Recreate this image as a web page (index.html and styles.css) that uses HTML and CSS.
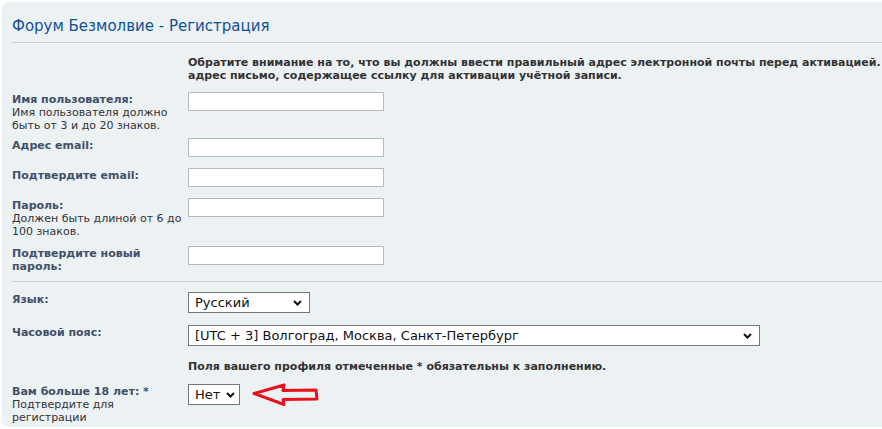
FILE: index.html
```html
<!DOCTYPE html>
<html lang="ru">
<head>
<meta charset="utf-8">
<title>Форум Безмолвие - Регистрация</title>
<link rel="stylesheet" href="styles.css">
</head>
<body>
<div class="panel">
  <h2 class="title">Форум Безмолвие - Регистрация</h2>

  <div class="notice">
    <span class="line">Обратите внимание на то, что вы должны ввести правильный адрес электронной почты перед активацией.</span>
    <span class="line">адрес письмо, содержащее ссылку для активации учётной записи.</span>
  </div>

  <div class="fields">
    <div class="row">
      <div class="label"><b>Имя пользователя:</b><span class="explain">Имя пользователя должно быть от 3 и до 20 знаков.</span></div>
      <div class="field"><input class="text" type="text"></div>
    </div>
    <div class="row">
      <div class="label"><b>Адрес email:</b></div>
      <div class="field"><input class="text" type="text"></div>
    </div>
    <div class="row">
      <div class="label"><b>Подтвердите email:</b></div>
      <div class="field"><input class="text" type="text"></div>
    </div>
    <div class="row">
      <div class="label"><b>Пароль:</b><span class="explain">Должен быть длиной от 6 до 100 знаков.</span></div>
      <div class="field"><input class="text" type="password"></div>
    </div>
    <div class="row row-last">
      <div class="label"><b class="narrow">Подтвердите новый пароль:</b></div>
      <div class="field"><input class="text" type="password"></div>
    </div>
  </div>

  <hr class="sep">

  <div class="fields fields2">
    <div class="row row-sel">
      <div class="label"><b>Язык:</b></div>
      <div class="field">
        <span class="sel sel-lang"><select><option>Русский</option></select><svg class="chev" width="9" height="6" viewBox="0 0 9 6"><path d="M1 1 L4.5 4.5 L8 1" fill="none" stroke="#111" stroke-width="2"/></svg></span>
      </div>
    </div>
    <div class="row row-sel">
      <div class="label"><b>Часовой пояс:</b></div>
      <div class="field">
        <span class="sel sel-tz"><select><option>[UTC + 3] Волгоград, Москва, Санкт-Петербург</option></select><svg class="chev" width="9" height="6" viewBox="0 0 9 6"><path d="M1 1 L4.5 4.5 L8 1" fill="none" stroke="#111" stroke-width="2"/></svg></span>
      </div>
    </div>
  </div>

  <p class="required">Поля вашего профиля отмеченные * обязательны к заполнению.</p>

  <div class="row row-age">
    <div class="label"><b>Вам больше 18 лет: *</b><span class="explain narrow">Подтвердите для регистрации</span></div>
    <div class="field">
      <span class="sel sel-age"><select><option>Нет</option><option>Да</option></select><svg class="chev" width="9" height="6" viewBox="0 0 9 6"><path d="M1 1 L4.5 4.5 L8 1" fill="none" stroke="#111" stroke-width="2"/></svg></span>
      <svg class="arrow" width="68" height="24" viewBox="0 0 68 24">
        <polygon points="2,10.5 32,2 31,7.5 64,7 65,16 31,16.5 32,21.5" fill="none" stroke="#e8101a" stroke-width="3" stroke-linejoin="round"/>
      </svg>
    </div>
  </div>
</div>
</body>
</html>
```
FILE: styles.css
```css
html, body {
  margin: 0;
  background: #ffffff;
  overflow: hidden;
}

body {
  padding: 2px 0 0 2px;
  font-family: "DejaVu Sans", Verdana, sans-serif;
  font-size: 11px;
  color: #333333;
}

.panel {
  background: #ecf1f3;
  border-radius: 7px 0 0 7px;
  padding: 14px 0 3px 10px;
}

.title {
  margin: 0;
  font-size: 15px;
  font-weight: normal;
  line-height: 20px;
  color: #115098;
  padding-bottom: 6px;
  border-bottom: 1px solid #cccccc;
}

.notice {
  margin: 13px 0 0 176px;
  font-weight: bold;
  line-height: 13px;
  color: #333333;
}

.notice .line {
  display: block;
  white-space: nowrap;
}

.fields {
  margin-top: 10px;
  display: flex;
  flex-direction: column;
  gap: 6px;
}

.row {
  display: flex;
  min-height: 24px;
}

.row-last {
  margin-top: 2px;
}

.label {
  width: 182px;
  margin-right: -6px;
  padding-top: 1px;
  line-height: 13px;
  color: #425067;
}

.label b {
  display: block;
  font-weight: bold;
}

.label .narrow {
  max-width: 160px;
}

.explain {
  display: block;
  color: #333333;
  font-weight: normal;
}

.field {
  display: flex;
  align-items: flex-start;
}

.text {
  box-sizing: border-box;
  width: 196px;
  height: 19px;
  margin: 0;
  padding: 2px 3px;
  border: 1px solid #b4bac0;
  background: #ffffff;
  font-family: "DejaVu Sans", Verdana, sans-serif;
  font-size: 11px;
}

.sep {
  margin: 8px 0 0;
  border: 0;
  border-top: 1px solid #cccccc;
  height: 0;
}

.fields2 {
  margin-top: 10px;
  gap: 6px;
}

.row-sel {
  min-height: 27px;
}

.sel {
  position: relative;
  display: inline-block;
}

.sel select {
  -webkit-appearance: none;
  appearance: none;
  box-sizing: border-box;
  height: 21px;
  margin: 0;
  padding: 0 22px 0 6px;
  border: 1px solid #767676;
  border-radius: 0;
  background: #ffffff;
  color: #111111;
  font-family: "DejaVu Sans", Verdana, sans-serif;
  font-size: 13px;
  line-height: 19px;
}

.sel-lang select {
  width: 122px;
}

.sel-tz select {
  width: 572px;
}

.sel-age select {
  width: 52px;
  padding-right: 18px;
}

.chev {
  position: absolute;
  right: 8px;
  top: 8px;
  pointer-events: none;
}

.sel-age .chev {
  right: 5px;
}

.required {
  margin: 8px 0 0 176px;
  font-weight: bold;
  line-height: 13px;
  color: #333333;
}

.row-age {
  margin-top: 11px;
}

.arrow {
  margin: -1px 0 0 12px;
  display: block;
}
```
